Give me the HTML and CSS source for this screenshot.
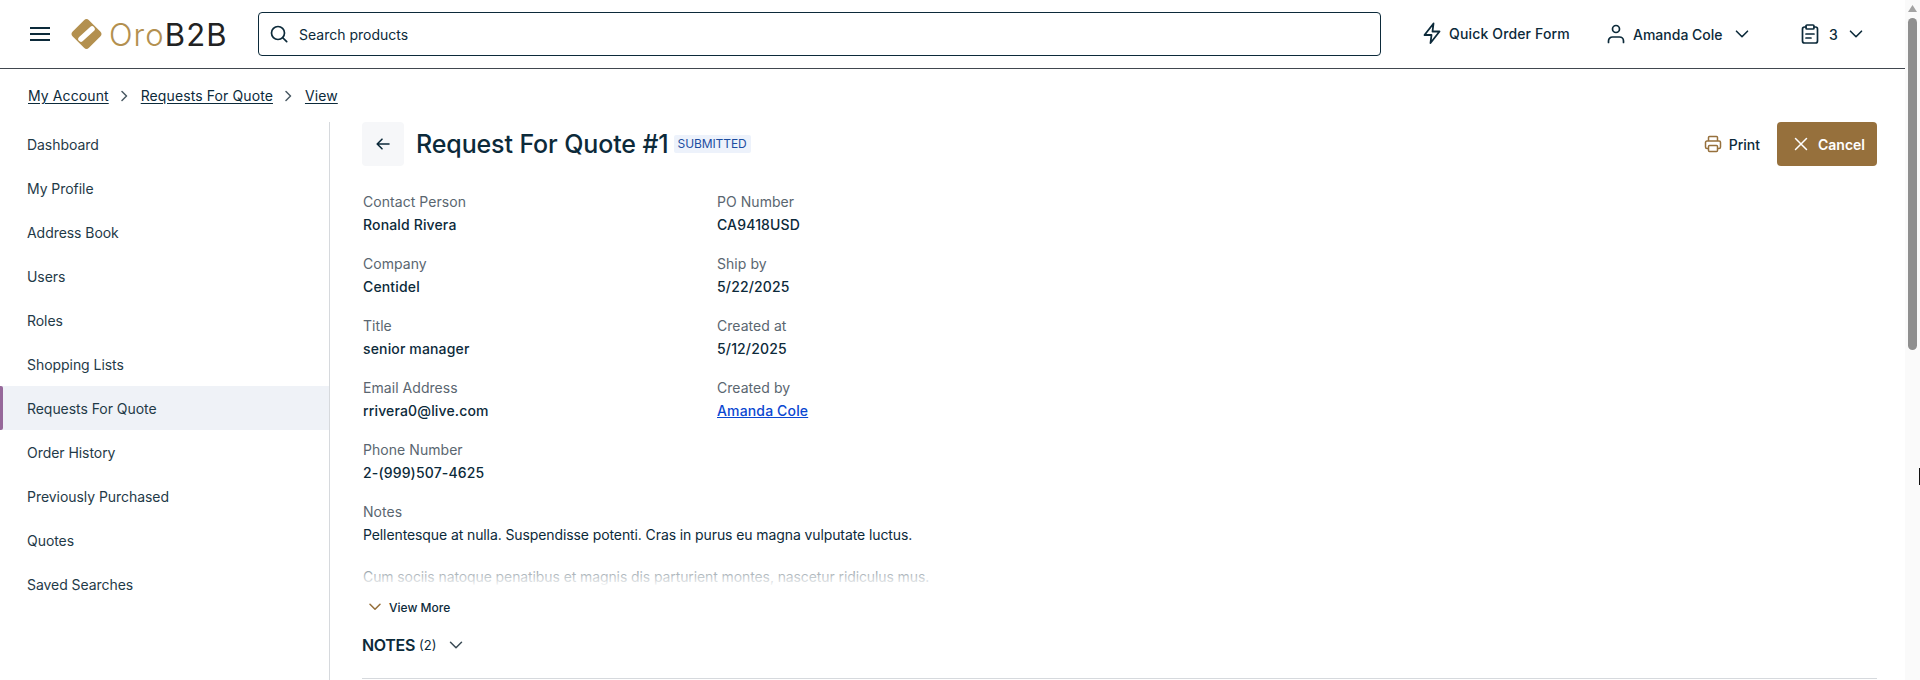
FILE: index.html
```html
<!DOCTYPE html>
<html lang="en">
<head>
<meta charset="utf-8">
<title>Request For Quote #1</title>
<link rel="stylesheet" href="styles.css">
</head>
<body>
<div class="page">
  <header class="topbar">
    <button class="hamburger" aria-label="Menu">
      <svg width="20" height="14" viewBox="0 0 20 14" fill="none" stroke="#0c2a3a" stroke-width="2"><path d="M0 1h20M0 7h20M0 13h20"/></svg>
    </button>
    <div class="logo">
      <svg class="logo-mark" width="33" height="32" viewBox="0 0 33 32"><rect x="5" y="4.500" width="23" height="23" rx="3.500" transform="rotate(45 16.500 16)" fill="#b3904f"/><path d="M11 21 22 11" stroke="#fff" stroke-width="5.500" stroke-linecap="round"/></svg>
      <span class="logo-text"><span class="logo-oro">Oro</span>B2B</span>
    </div>
    <div class="search">
      <svg width="18" height="18" viewBox="0 0 18 18" fill="none" stroke="#0c2a3a" stroke-width="1.700" stroke-linecap="round"><circle cx="8" cy="8" r="6.500"/><path d="M13 13l3.700 3.700"/></svg>
      <span class="search-text">Search products</span>
    </div>
    <nav class="actions">
      <a class="action quick">
        <svg width="24" height="24" viewBox="0 0 24 24" fill="none" stroke="#0c2a3a" stroke-width="1.800" stroke-linejoin="round" stroke-linecap="round"><path d="M13.500 2.500 4.500 14h7l-1 8L19.500 10.500h-7z"/></svg>
        <span>Quick Order Form</span>
      </a>
      <a class="action user">
        <svg width="18" height="20" viewBox="0 0 18 20" fill="none" stroke="#0c2a3a" stroke-width="1.700" stroke-linecap="round"><circle cx="9" cy="5" r="3.500"/><path d="M1.500 18.500v-1.500a4 4 0 0 1 4-4h7a4 4 0 0 1 4 4v1.500"/></svg>
        <span>Amanda Cole</span>
        <svg class="chev" width="14" height="8" viewBox="0 0 14 8" fill="none" stroke="#0c2a3a" stroke-width="1.600" stroke-linecap="round" stroke-linejoin="round"><path d="M1.500 1.200 7 6.700l5.500-5.500"/></svg>
      </a>
      <a class="action cart">
        <svg width="18" height="20" viewBox="0 0 18 20" fill="none" stroke="#0c2a3a" stroke-width="1.700" stroke-linecap="round" stroke-linejoin="round"><path d="M5 3H3.500a2 2 0 0 0-2 2v12a2 2 0 0 0 2 2h11a2 2 0 0 0 2-2V5a2 2 0 0 0-2-2H13"/><rect x="5" y="1" width="8" height="4" rx="1"/><path d="M5 10h8M5 14h5"/></svg>
        <span>3</span>
        <svg class="chev" width="14" height="8" viewBox="0 0 14 8" fill="none" stroke="#0c2a3a" stroke-width="1.600" stroke-linecap="round" stroke-linejoin="round"><path d="M1.500 1.200 7 6.700l5.500-5.500"/></svg>
      </a>
    </nav>
  </header>

  <nav class="crumbs">
    <a>My Account</a>
    <svg width="7" height="12" viewBox="0 0 7 12" fill="none" stroke="#4a5a64" stroke-width="1.500" stroke-linecap="round" stroke-linejoin="round"><path d="M1 1.500 5.500 6 1 10.500"/></svg>
    <a>Requests For Quote</a>
    <svg width="7" height="12" viewBox="0 0 7 12" fill="none" stroke="#4a5a64" stroke-width="1.500" stroke-linecap="round" stroke-linejoin="round"><path d="M1 1.500 5.500 6 1 10.500"/></svg>
    <a>View</a>
  </nav>

  <div class="layout">
    <aside class="sidebar">
      <a class="side-item">Dashboard</a>
      <a class="side-item">My Profile</a>
      <a class="side-item">Address Book</a>
      <a class="side-item">Users</a>
      <a class="side-item">Roles</a>
      <a class="side-item">Shopping Lists</a>
      <a class="side-item active">Requests For Quote</a>
      <a class="side-item">Order History</a>
      <a class="side-item">Previously Purchased</a>
      <a class="side-item">Quotes</a>
      <a class="side-item">Saved Searches</a>
    </aside>
    <main class="main">
      <div class="title-row">
        <a class="back">
          <svg width="14" height="12" viewBox="0 0 14 12" fill="none" stroke="#0c2a3a" stroke-width="1.600" stroke-linecap="round" stroke-linejoin="round"><path d="M13 6H1.500M6 1.200 1.200 6 6 10.800"/></svg>
        </a>
        <h1 class="title">Request For Quote #1</h1>
        <span class="badge">SUBMITTED</span>
        <div class="title-actions">
          <a class="print">
            <svg width="18" height="18" viewBox="0 0 18 18" fill="none" stroke="#96703c" stroke-width="1.500" stroke-linejoin="round"><path d="M4.500 6V2.500a1 1 0 0 1 1-1h7a1 1 0 0 1 1 1V6"/><path d="M4.500 13.500H3a1.500 1.500 0 0 1-1.500-1.500V7.500A1.500 1.500 0 0 1 3 6h12a1.500 1.500 0 0 1 1.500 1.500V12a1.500 1.500 0 0 1-1.500 1.500h-1.500"/><rect x="4.500" y="10.500" width="9" height="6" rx="1"/></svg>
            <span>Print</span>
          </a>
          <a class="cancel">
            <svg width="14" height="14" viewBox="0 0 14 14" fill="none" stroke="#fff" stroke-width="1.500" stroke-linecap="round"><path d="M1.500 1.500l11 11M12.500 1.500l-11 11"/></svg>
            <span>Cancel</span>
          </a>
        </div>
      </div>

      <div class="fields">
        <div class="field"><div class="label">Contact Person</div><div class="value">Ronald Rivera</div></div>
        <div class="field"><div class="label">PO Number</div><div class="value">CA9418USD</div></div>
        <div class="field"><div class="label">Company</div><div class="value">Centidel</div></div>
        <div class="field"><div class="label">Ship by</div><div class="value">5/22/2025</div></div>
        <div class="field"><div class="label">Title</div><div class="value">senior manager</div></div>
        <div class="field"><div class="label">Created at</div><div class="value">5/12/2025</div></div>
        <div class="field"><div class="label">Email Address</div><div class="value">rrivera0@live.com</div></div>
        <div class="field"><div class="label">Created by</div><div class="value"><a class="link">Amanda Cole</a></div></div>
        <div class="field"><div class="label">Phone Number</div><div class="value">2-(999)507-4625</div></div>
      </div>

      <div class="notes">
        <div class="label">Notes</div>
        <div class="notes-body">
          <p>Pellentesque at nulla. Suspendisse potenti. Cras in purus eu magna vulputate luctus.</p>
          <p>Cum sociis natoque penatibus et magnis dis parturient montes, nascetur ridiculus mus.</p>
        </div>
      </div>
      <a class="more">
        <svg width="12" height="8" viewBox="0 0 12 8" fill="none" stroke="#96703c" stroke-width="1.500" stroke-linecap="round" stroke-linejoin="round"><path d="M1 1.200 6 6.300l5-5.100"/></svg>
        <span>View More</span>
      </a>
      <div class="section-head">
        <span class="section-title">NOTES</span>
        <span class="section-count">(2)</span>
        <svg width="14" height="8" viewBox="0 0 14 8" fill="none" stroke="#3a4a54" stroke-width="1.500" stroke-linecap="round" stroke-linejoin="round"><path d="M1.500 1.200 7 6.700l5.500-5.500"/></svg>
      </div>
      <div class="section-line"></div>
    </main>
  </div>

  <div class="scrollbar">
    <svg class="scroll-arrow" width="9" height="7" viewBox="0 0 9 7"><path fill="#a3a3a3" d="M4.500 0 9 7H0z"/></svg>
    <div class="scroll-thumb"></div>
  </div>
  <div class="cursor-mark"></div>
</div>
</body>
</html>
```
FILE: styles.css
```css
* { box-sizing: border-box; }
html, body { margin: 0; height: 680px; overflow: hidden; background: #fff; }
body { font-family: "Inter", "Liberation Sans", sans-serif; font-size: 14px; color: #0c2a3a; }
a { color: inherit; }
.page { position: relative; width: 1920px; height: 680px; padding-right: 15px; overflow: hidden; }

.topbar { height: 69px; display: flex; align-items: center; border-bottom: 1px solid #41474f; padding: 0 0 0 30px; }
.hamburger { background: none; border: 0; padding: 0; width: 20px; height: 14px; display: block; margin-right: 20px; }
.hamburger svg { display: block; }
.logo { display: flex; align-items: center; gap: 6px; width: 188px; }
.logo-mark { display: block; flex: none; }
.logo-text { font-size: 31px; line-height: 1; color: #222; font-weight: 400; letter-spacing: 1.1px; }
.logo-oro { color: #b3904f; font-weight: 300; }
.search { width: 1123px; height: 44px; border: 1px solid #0c2a3a; border-radius: 4px; display: flex; align-items: center; gap: 11px; padding: 0 11px; }
.search-text { font-size: 14px; }
.actions { display: flex; align-items: center; margin-left: 39px; font-size: 14px; font-weight: 500; }
.action { display: flex; align-items: center; }
.quick { gap: 5px; width: 187px; margin-bottom: 2px; letter-spacing: 0.15px; }
.user { gap: 8px; width: 194px; }
.user .chev { margin-left: 4px; }
.cart { gap: 10px; }
.cart .chev { margin-left: 1px; }
.chev { display: block; }

.crumbs { height: 53px; display: flex; align-items: center; gap: 12.5px; padding-left: 28px; font-size: 14px; letter-spacing: 0.1px; }
.crumbs a { text-decoration: underline; text-underline-offset: 2px; }

.layout { display: flex; align-items: stretch; height: 558px; }
.sidebar { width: 330px; flex: none; border-right: 1px solid #d6d9dd; display: flex; flex-direction: column; }
.side-item { height: 44px; padding-top: 1px; line-height: 44px; padding-left: 27px; color: #1f3a48; font-size: 14px; flex: none; letter-spacing: -0.05px; }
.side-item.active { background: #eff2f7; position: relative; }
.side-item.active::before { content: ""; position: absolute; left: 0; top: 0; width: 3px; height: 44px; background: #96689a; border-radius: 0 2px 2px 0; }

.main { flex: 1; padding: 0 28px 0 32px; min-width: 0; }
.title-row { display: flex; align-items: center; height: 44px; }
.back { width: 42px; height: 44px; background: #f6f7f9; border-radius: 4px; display: flex; align-items: center; justify-content: center; margin-right: 12px; }
.title { margin: 0; font-size: 25px; font-weight: 500; line-height: 44px; letter-spacing: -0.12px; }
.badge { margin-left: 5px; background: #edf2fb; color: #1c4da1; font-size: 12px; line-height: 18px; padding: 0 4px; border-radius: 2px; letter-spacing: -0.1px; }
.title-actions { margin-left: auto; display: flex; align-items: center; gap: 17px; }
.print { display: flex; align-items: center; gap: 7px; font-weight: 500; font-size: 14px; }
.cancel { width: 100px; height: 44px; background: #96703c; color: #fff; border-radius: 4px; display: flex; align-items: center; padding-left: 17px; gap: 10px; font-weight: 600; font-size: 14px; }

.fields { display: grid; grid-template-columns: 354px 354px; margin-top: 26px; padding-left: 1px; row-gap: 19px; }
.label { color: #5a6670; font-size: 14px; line-height: 20px; letter-spacing: 0.05px; }
.value { font-weight: 500; font-size: 14px; line-height: 20px; margin-top: 3px; letter-spacing: 0.15px; }
.link { color: #0b47d1; text-decoration: underline; }
.notes { margin-top: 19px; padding-left: 1px; }
.notes-body { position: relative; height: 72px; margin-top: 3px; overflow: hidden; }
.notes-body p { margin: 0 0 22px; line-height: 20px; letter-spacing: -0.1px; }
.notes-body::after { content: ""; position: absolute; left: 0; right: 0; top: 28px; height: 34px; background: linear-gradient(to bottom, rgba(255,255,255,0.1), #fff); }
.more { display: flex; align-items: center; gap: 8px; padding-left: 7px; font-size: 12px; font-weight: 500; height: 20px; }
.section-head { display: flex; align-items: center; height: 24px; margin-top: 16px; }
.section-title { font-size: 16px; font-weight: 600; letter-spacing: -0.3px; }
.section-count { font-size: 13px; margin-left: 4px; }
.section-head svg { margin-left: 12px; }
.section-line { height: 1px; background: #d6d9dd; margin-top: 21px; }

.scrollbar { position: absolute; top: 0; right: 0; width: 15px; height: 680px; background: #fafafa; }
.scroll-arrow { position: absolute; top: 5px; left: 3px; }
.scroll-thumb { position: absolute; top: 18px; left: 3px; width: 9px; height: 332px; border-radius: 5px; background: #8f8f8f; }
.cursor-mark { position: absolute; right: 0; top: 468px; width: 1px; height: 17px; background: #111; }
```
